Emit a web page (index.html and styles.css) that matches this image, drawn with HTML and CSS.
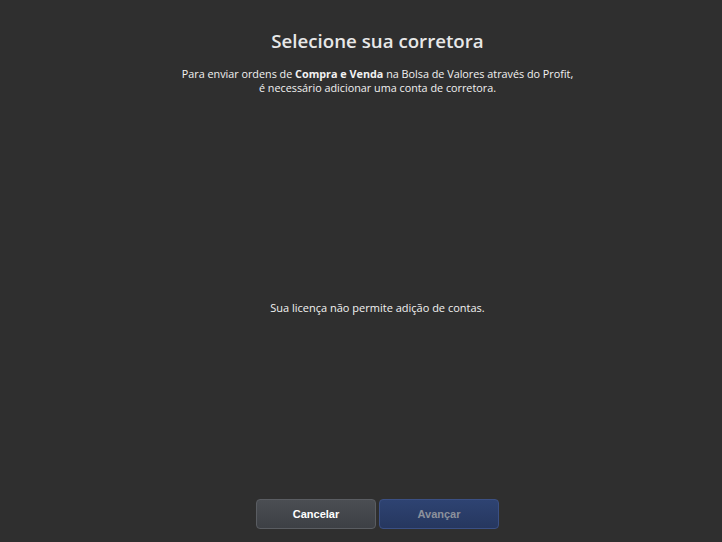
FILE: index.html
```html
<!DOCTYPE html>
<html lang="pt-BR">
<head>
  <meta charset="UTF-8">
  <title>Selecione sua corretora</title>
  <link rel="stylesheet" href="styles.css">
</head>
<body>

  <div class="wizard">
    <div class="header">
      <h1>Selecione sua corretora</h1>
      <p>Para enviar ordens de <b>Compra e Venda</b> na Bolsa de Valores através do Profit,<br>
        é necessário adicionar uma conta de corretora.</p>
    </div>

    <div class="content">
      <p>Sua licença não permite adição de contas.</p>
    </div>

    <div class="footer">
      <button class="btn btn-cancel">Cancelar</button>
      <button class="btn btn-next" disabled>Avançar</button>
    </div>
  </div>

</body>
</html>
```

FILE: styles.css
```css
* {
  box-sizing: border-box;
}

body {
  margin: 0;
  background: #2f2f2f;
  color: #f2f2f2;
  font-family: "Open Sans", "Noto Sans", sans-serif;
}

.wizard {
  height: 100vh;
  padding-left: 33px;
  display: flex;
  flex-direction: column;
  align-items: center;
}

.header {
  text-align: center;
  padding-top: 28px;
}

.header h1 {
  margin: 0;
  font-size: 18.7px;
  font-weight: 600;
  color: #e8e8e8;
}

.header p {
  margin: 14px 0 0;
  font-size: 10.8px;
  line-height: 14px;
}

.content {
  flex: 1;
  display: flex;
  align-items: center;
  justify-content: center;
  font-size: 11px;
}

.content p {
  margin: 21px 0 0;
}

.footer {
  display: flex;
  gap: 3px;
  padding-bottom: 13px;
}

.btn {
  width: 120px;
  height: 30px;
  border-radius: 4px;
  font-family: "Liberation Sans", Arial, sans-serif;
  font-size: 11px;
  font-weight: bold;
}

.btn-cancel {
  background: linear-gradient(#4b4e53, #3d4045);
  border: 1px solid #5a5d62;
  color: #ffffff;
}

.btn-next {
  background: linear-gradient(#2e4372, #26375f);
  border: 1px solid #3b5084;
  color: #8c919c;
}
```
